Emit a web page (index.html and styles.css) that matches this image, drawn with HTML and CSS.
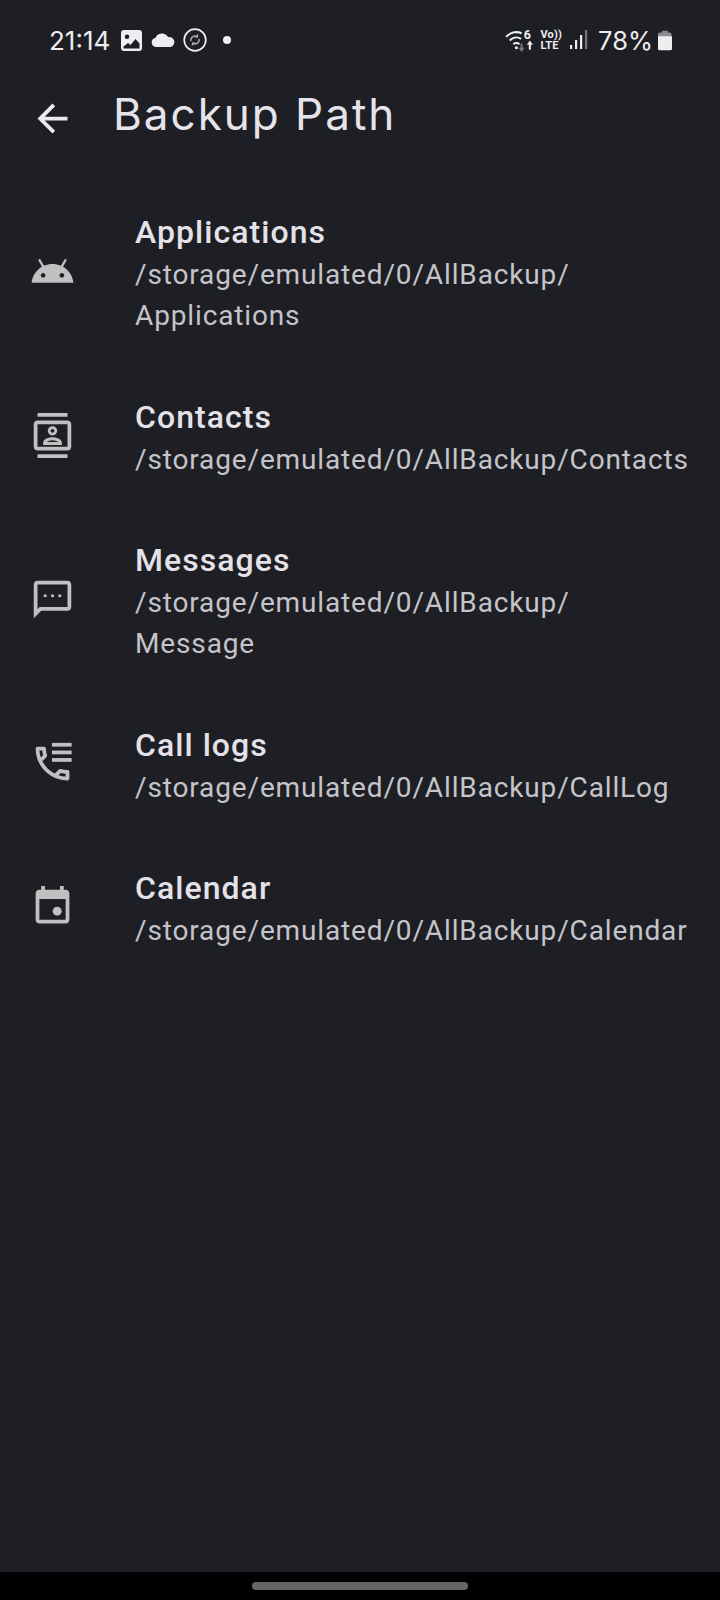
FILE: index.html
```html
<!DOCTYPE html>
<html lang="en">
<head>
    <meta charset="UTF-8">
    <title>Backup Path</title>
    <link rel="stylesheet" href="styles.css">
</head>
<body>
    <div class="screen">
        <div class="status-bar">
            <span class="clock">21:14</span>
            <svg class="st-image" viewBox="0 0 21 21"><path fill-rule="evenodd" d="M3 0h15a3 3 0 0 1 3 3v15a3 3 0 0 1-3 3H3a3 3 0 0 1-3-3V3a3 3 0 0 1 3-3zM6 4.500a2.300 2.300 0 1 0 0 4.600a2.300 2.300 0 0 0 0-4.600zM2.500 16.500v2h16v-5l-4-4.500l-5 6l-2.500-2z"/></svg>
            <svg class="st-cloud" viewBox="0 0 24 14"><path d="M5 14a4.500 4.500 0 0 1-.7-8.900A7 7 0 0 1 17 4.100a5 5 0 0 1 2.500 9.900z"/></svg>
            <svg class="st-sync" viewBox="0 0 24 24"><circle cx="12" cy="12" r="10.800" fill="none" stroke="#eeedf0" stroke-width="1.700"/><path fill="none" stroke="#a9a9ad" stroke-width="1.500" d="M8 13a4 4 0 0 1 6-4.300M16 11a4 4 0 0 1-6 4.300M14.500 6.500l-.2 2.400l-2.400-.2M9.500 17.500l.2-2.400l2.400.2"/></svg>
            <span class="st-dot"></span>
            <span class="st-spacer"></span>
            <svg class="st-wifi" viewBox="0 0 28 22"><path fill="none" stroke="#eeedf0" stroke-width="2" d="M1 7.500c5-5 11-5.500 15-3.500M4.500 11c3.500-3.500 8-3.500 11-1.500M8 14.500c2-1.500 4-1.500 6 0"/><circle cx="11" cy="18" r="1.500"/><text class="st-six" x="18" y="10">6</text><path fill="#77777b" d="M15 14h2v4h2l-3 4l-3-4h2z"/><path d="M24 11l3 4h-2v5h-2v-5h-2z"/></svg>
            <span class="volte"><span>Vo))</span><span>LTE</span></span>
            <svg class="st-signal" viewBox="0 0 18 20"><rect x="0" y="15" width="2.200" height="4"/><rect x="5" y="10" width="2.200" height="9"/><rect x="10" y="5" width="2.200" height="14"/><rect x="15" y="0" width="2.200" height="19" fill="#77777b"/></svg>
            <span class="battery-text">78%</span>
            <svg class="st-battery" viewBox="0 0 15 21"><path fill="#8d8d90" d="M4.500 0h6v2h2a2 2 0 0 1 2 2v3H0V4a2 2 0 0 1 2-2h2.500z"/><path d="M0 6h15v13a2 2 0 0 1-2 2H2a2 2 0 0 1-2-2z"/></svg>
        </div>

        <div class="app-bar">
            <svg class="icon back-icon" viewBox="0 0 24 24"><path d="M20 11H7.830l5.590-5.590L12 4l-8 8 8 8 1.410-1.410L7.830 13H20v-2z"/></svg>
            <h1>Backup Path</h1>
        </div>

        <div class="list">
            <div class="row">
                <svg class="icon" viewBox="0 0 24 24"><path d="M17.600 9.480l1.840-3.180c.16-.31.04-.69-.26-.85-.29-.15-.65-.06-.83.22l-1.880 3.240c-2.860-1.210-6.080-1.210-8.940 0L5.650 5.670c-.19-.29-.58-.38-.87-.2-.28.18-.37.54-.22.83L6.400 9.480C3.300 11.250 1.200 14.450.85 18h22.300c-.35-3.550-2.450-6.750-5.550-8.520zM7 15.250c-.69 0-1.250-.56-1.250-1.250s.56-1.250 1.250-1.250 1.250.56 1.250 1.250-.56 1.250-1.250 1.250zm10 0c-.69 0-1.250-.56-1.250-1.250s.56-1.250 1.250-1.250 1.250.56 1.250 1.250-.56 1.250-1.250 1.250z"/></svg>
                <div class="row-text">
                    <div class="row-title">Applications</div>
                    <div class="row-path">/storage/emulated/0/AllBackup/<wbr>Applications</div>
                </div>
            </div>
            <div class="row">
                <svg class="icon" viewBox="0 0 24 24"><path d="M20 0H4v2h16V0zM4 24h16v-2H4v2zM20 4H4c-1.100 0-2 .9-2 2v12c0 1.100.9 2 2 2h16c1.100 0 2-.9 2-2V6c0-1.100-.9-2-2-2zm0 14H4V6h16v12zm-8-6c1.380 0 2.500-1.120 2.500-2.500S13.380 7 12 7 9.500 8.120 9.500 9.500 10.620 12 12 12zm0-3.500c.55 0 1 .45 1 1s-.45 1-1 1-1-.45-1-1 .45-1 1-1zm5 7.490c0-2.100-3.310-3-5-3s-5 .9-5 3V17h10v-1.010zm-8.190-.49c.61-.52 2.030-1 3.190-1 1.170 0 2.590.48 3.200 1H8.810z"/></svg>
                <div class="row-text">
                    <div class="row-title">Contacts</div>
                    <div class="row-path">/storage/emulated/0/AllBackup/<wbr>Contacts</div>
                </div>
            </div>
            <div class="row">
                <svg class="icon" viewBox="0 0 24 24"><path d="M20 2H4c-1.100 0-1.990.9-1.990 2L2 22l4-4h14c1.100 0 2-.9 2-2V4c0-1.100-.9-2-2-2zm0 14H5.170L4 17.170V4h16v12z"/><circle cx="8.100" cy="10" r=".85"/><circle cx="12" cy="10" r=".85"/><circle cx="15.900" cy="10" r=".85"/></svg>
                <div class="row-text">
                    <div class="row-title">Messages</div>
                    <div class="row-path row-path-short">/storage/emulated/0/AllBackup/<wbr>Message</div>
                </div>
            </div>
            <div class="row">
                <svg class="icon" viewBox="0 0 24 24"><path d="M6.540 5c.06.89.21 1.760.45 2.590l-1.200 1.200c-.41-1.200-.67-2.470-.76-3.790h1.510m9.860 12.020c.85.24 1.720.39 2.600.45v1.490c-1.320-.09-2.590-.35-3.800-.75l1.200-1.190M7.500 3H4c-.55 0-1 .45-1 1 0 9.390 7.610 17 17 17 .55 0 1-.45 1-1v-3.490c0-.55-.45-1-1-1-1.240 0-2.450-.2-3.570-.57-.1-.04-.21-.05-.31-.05-.26 0-.51.1-.71.29l-2.200 2.200c-2.830-1.450-5.150-3.760-6.590-6.590l2.200-2.200c.28-.28.36-.67.25-1.020C8.700 6.450 8.500 5.250 8.500 4c0-.55-.45-1-1-1z"/><rect x="11.700" y="1" width="10.500" height="2"/><rect x="11.700" y="5.100" width="10.500" height="2"/><rect x="11.700" y="9.100" width="10.500" height="2"/></svg>
                <div class="row-text">
                    <div class="row-title">Call logs</div>
                    <div class="row-path">/storage/emulated/0/AllBackup/<wbr>CallLog</div>
                </div>
            </div>
            <div class="row">
                <svg class="icon" viewBox="0 0 24 24"><path d="M19 3h-1V1h-2v2H8V1H6v2H5c-1.110 0-1.990.9-1.990 2L3 19c0 1.100.89 2 2 2h14c1.100 0 2-.9 2-2V5c0-1.100-.9-2-2-2zm0 16H5V8h14v11z"/><circle cx="14.500" cy="14.500" r="2.400"/></svg>
                <div class="row-text">
                    <div class="row-title">Calendar</div>
                    <div class="row-path">/storage/emulated/0/AllBackup/<wbr>Calendar</div>
                </div>
            </div>
        </div>

        <div class="nav-bar"><span class="nav-pill"></span></div>
    </div>
</body>
</html>
```
FILE: styles.css
```css
body {
    margin: 0;
    padding: 0;
    background-color: #1e1f24;
    font-family: Roboto, "Liberation Sans", sans-serif;
}
.screen {
    display: flex;
    flex-direction: column;
    height: 1600px;
    overflow: hidden;
}
.status-bar {
    display: flex;
    align-items: center;
    height: 40px;
    padding: 20px 48px 0 49px;
    color: #eeedf0;
    fill: #eeedf0;
}
.clock {
    font-family: Inter, sans-serif;
    font-size: 26px;
    margin-right: 11px;
}
.st-image {
    width: 21px;
    height: 21px;
    margin-right: 9px;
}
.st-cloud {
    width: 24px;
    height: 14px;
    margin-right: 8px;
}
.st-sync {
    width: 24px;
    height: 24px;
    margin-right: 16px;
}
.st-dot {
    width: 8px;
    height: 8px;
    border-radius: 50%;
    background-color: #eeedf0;
}
.st-spacer {
    flex: 1;
}
.st-wifi {
    width: 29px;
    height: 23px;
    margin-right: 6px;
    overflow: visible;
}
.st-six {
    font-family: Roboto, sans-serif;
    font-size: 12px;
    font-weight: 700;
}
.volte {
    display: flex;
    flex-direction: column;
    font-size: 11px;
    font-weight: 700;
    line-height: 11px;
    margin-right: 8px;
    letter-spacing: 0.2px;
}
.st-signal {
    width: 18px;
    height: 20px;
    margin-right: 10px;
}
.battery-text {
    font-family: Inter, sans-serif;
    font-size: 25.5px;
    margin-right: 5px;
}
.st-battery {
    width: 14px;
    height: 21px;
}
.icon {
    flex: none;
    width: 45px;
    height: 45px;
    margin-bottom: 5px;
    fill: #c0c0c0;
}
.app-bar {
    display: flex;
    align-items: center;
    height: 121px;
    padding-left: 30px;
}
.back-icon {
    fill: #eceaf0;
}
h1 {
    margin: -14px 0 0 38px;
    font-family: Inter, sans-serif;
    font-size: 44px;
    font-weight: 400;
    letter-spacing: 2px;
    color: #e6e4ea;
}
.list {
    flex: 1;
}
.row {
    display: flex;
    align-items: center;
    gap: 60px;
    padding: 30px 20px 29.5px 30px;
}
.row-title {
    font-size: 32px;
    font-weight: 500;
    letter-spacing: 1.05px;
    line-height: 43px;
    color: #e4e2e8;
}
.row-path {
    font-size: 28px;
    line-height: 41px;
    letter-spacing: 0.86px;
    color: #c5c4cb;
}
.row-path-short {
    max-width: 540px;
}
.nav-bar {
    display: flex;
    align-items: center;
    justify-content: center;
    height: 28px;
    background-color: #000;
}
.nav-pill {
    width: 216px;
    height: 8px;
    border-radius: 4px;
    background-color: #666;
}
```
